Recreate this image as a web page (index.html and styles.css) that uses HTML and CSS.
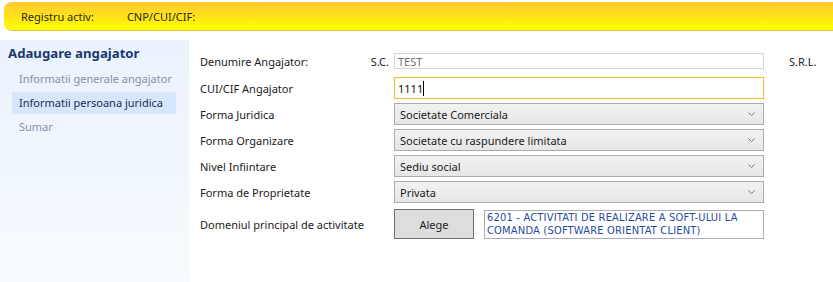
FILE: index.html
```html
<!DOCTYPE html>
<html lang="ro">

<head>
    <meta charset="UTF-8">
    <title>Adaugare angajator</title>
    <link rel="stylesheet" href="styles.css">
</head>

<body>

    <div class="topbar">
        <span class="topbar-label">Registru activ:</span>
        <span class="topbar-label">CNP/CUI/CIF:</span>
    </div>

    <div class="layout">
        <aside class="sidebar">
            <div class="sidebar-title">Adaugare angajator</div>
            <div class="nav-item">Informatii generale angajator</div>
            <div class="nav-item active">Informatii persoana juridica</div>
            <div class="nav-item">Sumar</div>
        </aside>

        <main class="form">
            <div class="row row-name">
                <div class="label">Denumire Angajator: <span class="prefix">S.C.</span></div>
                <div class="field text-box muted">TEST</div>
                <div class="suffix">S.R.L.</div>
            </div>
            <div class="row row-cui">
                <div class="label">CUI/CIF Angajator</div>
                <div class="field text-box focused">1111<span class="caret"></span></div>
            </div>
            <div class="row row-select">
                <div class="label">Forma Juridica</div>
                <div class="field combo">Societate Comerciala
                    <svg class="chevron" viewBox="0 0 7 4"><polyline points="0.5,0.5 3.5,3.5 6.5,0.5" /></svg>
                </div>
            </div>
            <div class="row row-select">
                <div class="label">Forma Organizare</div>
                <div class="field combo">Societate cu raspundere limitata
                    <svg class="chevron" viewBox="0 0 7 4"><polyline points="0.5,0.5 3.5,3.5 6.5,0.5" /></svg>
                </div>
            </div>
            <div class="row row-select">
                <div class="label">Nivel Infiintare</div>
                <div class="field combo">Sediu social
                    <svg class="chevron" viewBox="0 0 7 4"><polyline points="0.5,0.5 3.5,3.5 6.5,0.5" /></svg>
                </div>
            </div>
            <div class="row row-select">
                <div class="label">Forma de Proprietate</div>
                <div class="field combo">Privata
                    <svg class="chevron" viewBox="0 0 7 4"><polyline points="0.5,0.5 3.5,3.5 6.5,0.5" /></svg>
                </div>
            </div>
            <div class="row row-domain">
                <div class="label">Domeniul principal de activitate</div>
                <div class="field domain">
                    <div class="button">Alege</div>
                    <div class="domain-text">6201 - ACTIVITATI DE REALIZARE A SOFT-ULUI LA COMANDA (SOFTWARE ORIENTAT CLIENT)</div>
                </div>
            </div>
        </main>
    </div>

</body>

</html>
```

FILE: styles.css
```css
body {
    margin: 0;
    background-color: #ffffff;
    font-family: 'Noto Sans', 'Open Sans', sans-serif;
    font-size: 11px;
    color: #1b1b1b;
    width: 833px;
    height: 282px;
    overflow: hidden;
    white-space: nowrap;
}

/* yellow status strip on top */
.topbar {
    margin: 2px 0 0 4px;
    height: 29px;
    box-sizing: border-box;
    border-radius: 8px 0 0 8px;
    border-bottom: 1px solid #f0c24a;
    background: linear-gradient(to bottom, #ffc931 0%, #ffe21a 50%, #ffff00 100%);
    display: flex;
    align-items: center;
    padding-left: 17px;
}

.topbar-label {
    color: #2a2a10;
    margin-right: 33px;
}

.layout {
    display: flex;
    margin-top: 9px;
    height: 243px;
}

.sidebar {
    width: 189px;
    flex-shrink: 0;
    background: linear-gradient(to bottom, #eaf2fd 0%, #f7fbff 100%);
    padding-top: 2px;
    box-sizing: border-box;
}

.sidebar-title {
    font-size: 13.2px;
    font-weight: bold;
    color: #1c3870;
    padding-left: 8px;
    height: 22px;
    line-height: 22px;
    margin-bottom: 4px;
}

.nav-item {
    margin-left: 12px;
    width: 164px;
    height: 22px;
    line-height: 22px;
    padding-left: 7px;
    box-sizing: border-box;
    color: #8a8ea8;
    margin-bottom: 2px;
}

.nav-item.active {
    background-color: #d7e7fb;
    color: #1d2a55;
}

.form {
    padding: 13px 0 0 11px;
}

.row {
    display: flex;
    align-items: center;
    margin-bottom: 4px;
}

.row-name {
    height: 16px;
    margin-bottom: 8px;
}

.row-cui,
.row-select {
    height: 22px;
}

.row-domain {
    height: 30px;
    margin-top: 6px;
}

.label {
    width: 194px;
    flex-shrink: 0;
    display: flex;
    justify-content: space-between;
    padding-right: 5px;
    box-sizing: border-box;
}

.field {
    width: 370px;
    height: 100%;
    box-sizing: border-box;
}

.suffix {
    margin-left: 25px;
}

.text-box {
    border: 1px solid #d4d4d4;
    display: flex;
    align-items: center;
    padding-left: 3px;
}

.text-box.muted {
    color: #6e6e6e;
}

.text-box.focused {
    border-color: #f4c220;
    color: #111111;
}

.caret {
    display: inline-block;
    width: 1px;
    height: 15px;
    background-color: #000000;
}

.combo {
    border: 1px solid #acacac;
    background: linear-gradient(to bottom, #f2f2f2 0%, #e6e6e6 100%);
    display: flex;
    align-items: center;
    justify-content: space-between;
    padding: 0 8px 0 5px;
}

.chevron {
    width: 7px;
    height: 4px;
    fill: none;
    stroke: #7a7a7a;
    stroke-width: 1;
}

.domain {
    display: flex;
    gap: 10px;
}

.button {
    width: 80px;
    height: 30px;
    box-sizing: border-box;
    border: 1px solid #707070;
    background-color: #dddddd;
    display: flex;
    align-items: center;
    justify-content: center;
}

.domain-text {
    flex: 1;
    height: 29px;
    margin-top: 1px;
    box-sizing: border-box;
    border: 1px solid #abadb3;
    padding: 0 2px;
    font-family: 'DejaVu Sans Condensed', 'Liberation Sans', sans-serif;
    font-size: 11px;
    line-height: 13px;
    color: #1f4c9e;
    letter-spacing: 0.2px;
    white-space: normal;
}
```
